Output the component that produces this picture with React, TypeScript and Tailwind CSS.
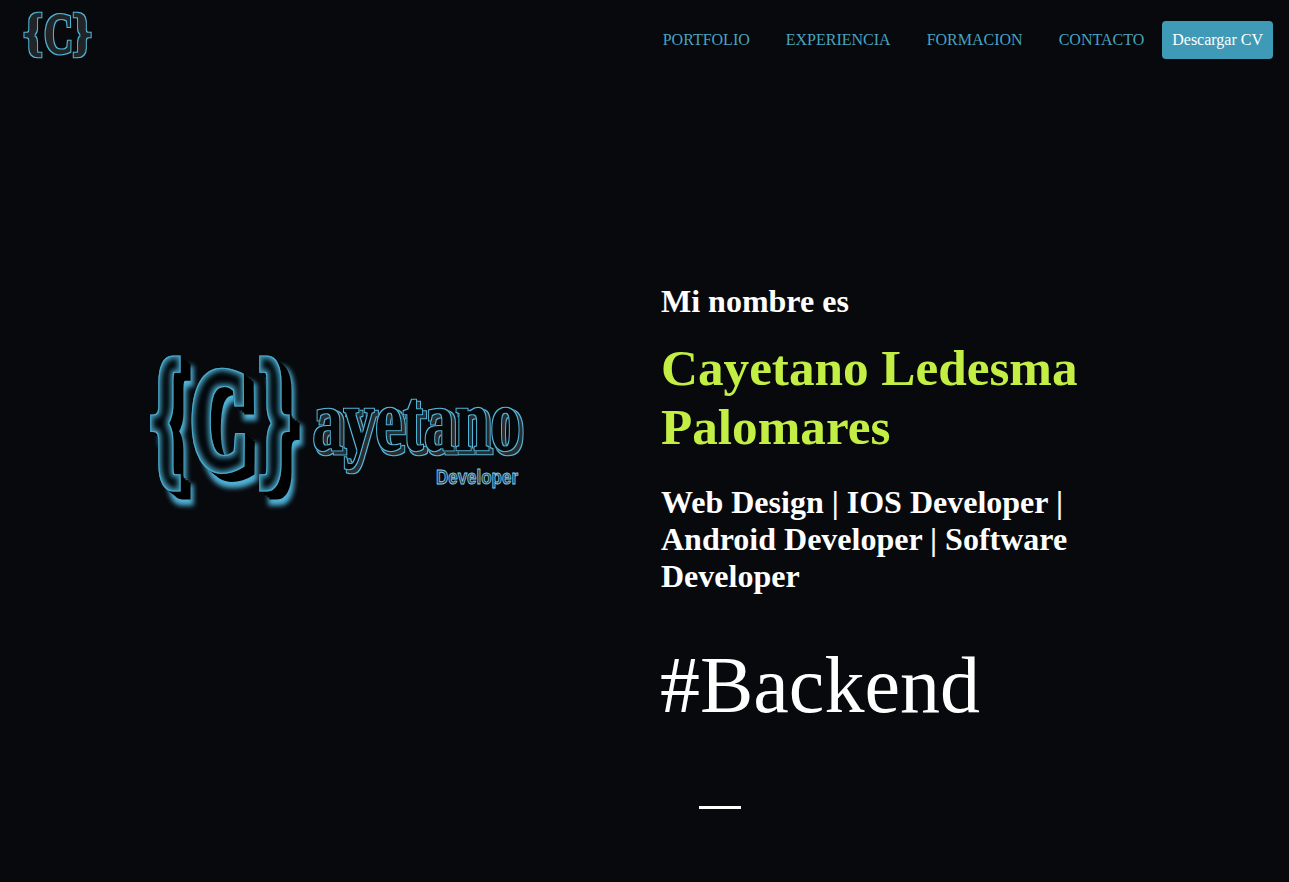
const serif = "font-['Liberation_Serif',_'Times_New_Roman',serif]";

const navLinks = ["PORTFOLIO", "EXPERIENCIA", "FORMACION", "CONTACTO"];

const BigLogo = () => (
  <svg width="390" height="170" viewBox="0 0 390 170" fill="none" className="block overflow-visible">
    <defs>
      {/* glow + black extrusion under the face, outline and cyan light inside the edges */}
      <filter id="logoBig" x="-15%" y="-15%" width="135%" height="135%" colorInterpolationFilters="sRGB">
        <feMorphology in="SourceAlpha" operator="dilate" radius="2" result="wide" />
        <feOffset in="wide" dx="11" dy="12" result="far" />
        <feGaussianBlur in="far" stdDeviation="2.5" result="farBlur" />
        <feFlood floodColor="#4fb3d9" />
        <feComposite in2="farBlur" operator="in" result="shadow" />
        <feOffset in="SourceAlpha" dx="2.5" dy="2" result="e1" />
        <feOffset in="SourceAlpha" dx="5" dy="4" result="e2" />
        <feOffset in="SourceAlpha" dx="7.5" dy="6" result="e3" />
        <feOffset in="SourceAlpha" dx="10" dy="8" result="e4" />
        <feMorphology in="SourceAlpha" operator="erode" radius="1" result="inner" />
        <feComposite in="SourceAlpha" in2="inner" operator="out" result="ringMask" />
        <feFlood floodColor="#4aa8c9" />
        <feComposite in2="ringMask" operator="in" result="ring" />
        <feMorphology in="SourceAlpha" operator="erode" radius="3" result="thin" />
        <feGaussianBlur in="thin" stdDeviation="2.5" result="thinBlur" />
        <feComposite in="SourceAlpha" in2="thinBlur" operator="out" result="edge" />
        <feFlood floodColor="#3f93b0" />
        <feComposite in2="edge" operator="in" result="innerGlow" />
        <feMerge>
          <feMergeNode in="shadow" />
          <feMergeNode in="e1" />
          <feMergeNode in="e2" />
          <feMergeNode in="e3" />
          <feMergeNode in="e4" />
          <feMergeNode in="SourceGraphic" />
          <feMergeNode in="innerGlow" />
          <feMergeNode in="ring" />
        </feMerge>
      </filter>
      <filter id="logoWord" x="-5%" y="-10%" width="115%" height="125%" colorInterpolationFilters="sRGB">
        <feMorphology in="SourceAlpha" operator="dilate" radius="1.2" result="fat" />
        <feOffset in="fat" dx="2.5" dy="2.5" result="fatOff" />
        <feFlood floodColor="#55b5d8" />
        <feComposite in2="fatOff" operator="in" result="rim" />
        <feOffset in="SourceAlpha" dx="2.5" dy="2.5" result="off" />
        <feFlood floodColor="#2a2d2f" />
        <feComposite in2="off" operator="in" result="side" />
        <feMorphology in="SourceAlpha" operator="erode" radius="1" result="inner" />
        <feComposite in="SourceAlpha" in2="inner" operator="out" result="ringMask" />
        <feFlood floodColor="#55b5d8" />
        <feComposite in2="ringMask" operator="in" result="ring" />
        <feMerge>
          <feMergeNode in="rim" />
          <feMergeNode in="side" />
          <feMergeNode in="SourceGraphic" />
          <feMergeNode in="ring" />
        </feMerge>
      </filter>
    </defs>
    <g filter="url(#logoBig)" fontFamily="'Liberation Serif', serif" fontWeight="700" fill="#02080c" stroke="#02080c">
      <text transform="translate(3.5 116) scale(0.55 1.08)" fontSize="140" strokeWidth="10">{"{"}</text>
      <text transform="translate(44 117) scale(0.557 1)" fontSize="140" strokeWidth="12">C</text>
      <text transform="translate(112 116) scale(0.55 1.08)" fontSize="140" strokeWidth="10">{"}"}</text>
    </g>
    <g filter="url(#logoWord)" fontFamily="'Liberation Serif', serif" fontWeight="700">
      <text x="165" y="100" fontSize="88" textLength="209" lengthAdjust="spacingAndGlyphs" fill="#05080b" stroke="#05080b" strokeWidth="2.5">ayetano</text>
    </g>
    <text x="289" y="134" fontFamily="'Liberation Sans', sans-serif" fontWeight="700" fontSize="20" textLength="82" lengthAdjust="spacingAndGlyphs" fill="#24404e" stroke="#86cfea" strokeWidth="0.9">Developer</text>
  </svg>
);

const SmallLogo = () => (
  <svg width="70" height="50" viewBox="0 0 70 50" fill="none" className="block overflow-visible">
    <defs>
      <filter id="logoSmall" x="-10%" y="-10%" width="125%" height="125%" colorInterpolationFilters="sRGB">
        <feMorphology in="SourceAlpha" operator="erode" radius="1.2" result="inner" />
        <feComposite in="SourceAlpha" in2="inner" operator="out" result="ringMask" />
        <feFlood floodColor="#4fb4d6" />
        <feComposite in2="ringMask" operator="in" result="ring" />
        <feMerge>
          <feMergeNode in="SourceGraphic" />
          <feMergeNode in="ring" />
        </feMerge>
      </filter>
    </defs>
    <g filter="url(#logoSmall)" fontFamily="'Liberation Serif', serif" fontWeight="700" fill="#222528" stroke="#222528" strokeWidth="4">
      <text transform="translate(1 38) scale(1 1.08)" fontSize="46">{"{"}</text>
      <text transform="translate(21 42) scale(0.72 1)" fontSize="56">C</text>
      <text transform="translate(50 38) scale(1 1.08)" fontSize="46">{"}"}</text>
    </g>
  </svg>
);

export default function App() {
  return (
    <div className={`h-[882px] overflow-hidden bg-[#07090d] ${serif}`}>
      <header className="flex items-start justify-between pl-[23px] pr-4">
        <div className="pt-[11px]">
          <SmallLogo />
        </div>
        <nav className="flex items-center pt-[21px]">
          {navLinks.map((link) => (
            <a key={link} className="px-[18px] text-base text-[#49a3c0]">
              {link}
            </a>
          ))}
          <a className="rounded bg-[#3e9ab7] px-2.5 py-[9px] text-base leading-5 text-white">Descargar CV</a>
        </nav>
      </header>

      <main className="flex pt-[222px]">
        <div className="w-[661px] pl-[147px] pt-[67px]">
          <BigLogo />
        </div>
        <div className="w-[430px] text-white">
          <h3 className="text-[32px] font-bold leading-[37px]">Mi nombre es</h3>
          <h1 className="mt-[18px] text-[51.2px] font-bold leading-[59px] text-[#c3ef45]">Cayetano Ledesma Palomares</h1>
          <h2 className="mt-[28px] text-[32px] font-bold leading-[37px]">Web Design | IOS Developer | Android Developer | Software Developer</h2>
          <p className="-ml-px mt-[44px] text-[80px] leading-[92px]">#Backend</p>
          <div className="ml-[38px] mt-[75px] h-[3px] w-[42px] bg-white" />
        </div>
      </main>
    </div>
  );
}
